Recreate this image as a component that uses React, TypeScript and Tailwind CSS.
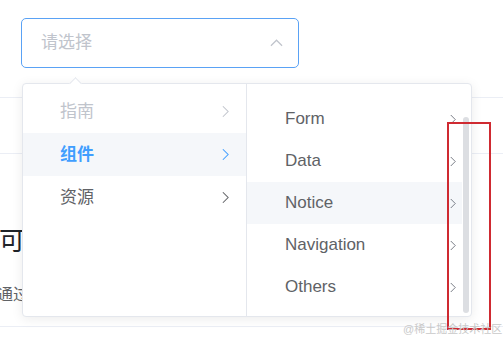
import React from "react";

const Chevron = ({ className }: { className?: string }) => (
  <svg viewBox="0 0 8 14" className={className} fill="none" stroke="currentColor" strokeWidth="1.2">
    <path d="M1 1l6 6-6 6" />
  </svg>
);

const ChevronUp = ({ className }: { className?: string }) => (
  <svg viewBox="0 0 14 8" className={className} fill="none" stroke="currentColor" strokeWidth="1.3">
    <path d="M1 7l6-6 6 6" />
  </svg>
);

const left = [
  { label: "指南", state: "disabled" },
  { label: "组件", state: "active" },
  { label: "资源", state: "normal" },
];

const right = ["Form", "Data", "Notice", "Navigation", "Others"];

const App = () => {
  return (
    <main className="relative h-[339px] w-[503px] overflow-hidden bg-white font-['Liberation_Sans','Noto_Sans_CJK_SC',sans-serif]">
      <div className="pt-[18px] pl-[21px]">
        <div className="flex h-[50px] w-[278px] items-center justify-between rounded-[5px] border border-[#5aa2f5] pl-[19px] pr-[15px]">
          <span className="text-[17px] text-[#c0c4cc]">请选择</span>
          <ChevronUp className="h-[8px] w-[13px] text-[#c0c4cc]" />
        </div>
      </div>

      <div className="mt-[29px] h-[56px] border-t border-[#ebeef5]" />
      <div className="border-t border-[#ebeef5]" />
      <h2 className="-ml-[1px] mt-[68px] text-[26px] leading-[39px] text-[#1f2329]">可清空</h2>
      <p className="-ml-[3px] mt-[22px] text-[16px] leading-[24px] text-[#606266]">通过 clearable 设置输入框可清空</p>
      <div className="mt-[19px] border-t border-[#ebeef5]" />

      {/* dropdown */}
      <section className="absolute left-[22px] top-[83px] flex h-[234px] w-[450px] rounded-[4px] border border-[#e4e7ed] bg-white shadow-[0_2px_12px_rgba(0,0,0,0.08)]">
        <div className="absolute -top-[5px] left-[48px] h-[9px] w-[9px] rotate-45 border-l border-t border-[#e4e7ed] bg-white" />
        <ul className="relative w-[224px] border-r border-[#e4e7ed] pt-[6px]">
          {left.map((it) => (
            <li
              key={it.label}
              className={`flex h-[43px] items-center justify-between pl-[37px] pr-[17px] text-[17px] ${
                it.state === "active"
                  ? "bg-[#f5f7fa] font-bold text-[#409eff]"
                  : it.state === "disabled"
                  ? "text-[#c0c4cc]"
                  : "text-[#606266]"
              }`}
            >
              <span>{it.label}</span>
              <Chevron className="h-[13px] w-[7px]" />
            </li>
          ))}
        </ul>
        <div className="relative flex-1">
          <ul className="mr-[9px] pt-[14px]">
            {right.map((r) => (
              <li
                key={r}
                className={`flex h-[42px] items-center justify-between pl-[38px] pr-[6px] text-[17px] text-[#606266] ${
                  r === "Notice" ? "bg-[#f5f7fa]" : ""
                }`}
              >
                <span>{r}</span>
                <Chevron className="h-[11px] w-[6px] text-[#6b6f7a]" />
              </li>
            ))}
          </ul>
          <div className="absolute right-[2px] top-[33px] h-[196px] w-[6px] rounded-full bg-[#dcdee2]" />
        </div>
      </section>

      {/* annotation */}
      <div className="absolute left-[447px] top-[122px] h-[208px] w-[44px] border-2 border-[#cf2a31]" />
      <span className="absolute left-[403px] top-[322px] text-[11px] leading-[14px] text-[#c9c9c9]">@稀土掘金技术社区</span>
    </main>
  );
};

export default App;
